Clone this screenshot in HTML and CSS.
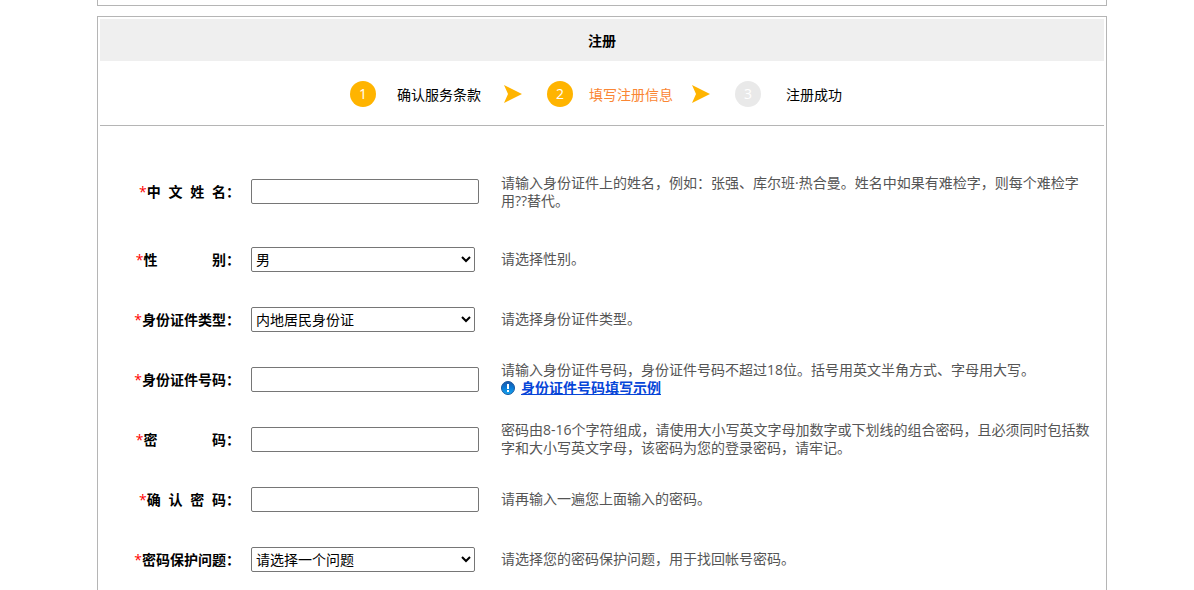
FILE: index.html
```
<!DOCTYPE html>
<html lang="zh-CN">
<head>
<meta charset="utf-8">
<title>注册</title>
<link rel="stylesheet" href="styles.css">
</head>
<body>
<header class="banner"></header>
<main class="panel">
  <h1 class="title">注册</h1>
  <ol class="steps">
    <li class="step"><span class="badge">1</span><span class="step-name step-name-first">确认服务条款</span></li>
    <li class="arrow" aria-hidden="true"><svg viewBox="0 0 20 18" width="20" height="18"><path d="M1 0 19 9 1 18 5 9z" fill="#ffb400"/></svg></li>
    <li class="step current"><span class="badge">2</span><span class="step-name">填写注册信息</span></li>
    <li class="arrow" aria-hidden="true"><svg viewBox="0 0 20 18" width="20" height="18"><path d="M1 0 19 9 1 18 5 9z" fill="#ffb400"/></svg></li>
    <li class="step todo"><span class="badge">3</span><span class="step-name step-name-last">注册成功</span></li>
  </ol>
  <form class="form">
    <div class="row row-tall">
      <label class="label" for="name"><span class="star">*</span>中&nbsp;&nbsp;文&nbsp;&nbsp;姓&nbsp;&nbsp;名：</label>
      <div class="control"><input class="field" type="text" id="name"></div>
      <p class="hint">请输入身份证件上的姓名，例如：张强、库尔班·热合曼。姓名中如果有难检字，则每个难检字<br>用??替代。</p>
    </div>
    <div class="row">
      <label class="label" for="sex"><span class="star">*</span>性&nbsp;&nbsp;&nbsp;&nbsp;&nbsp;&nbsp;&nbsp;&nbsp;&nbsp;&nbsp;&nbsp;&nbsp;&nbsp;&nbsp;别：</label>
      <div class="control"><select class="select" id="sex"><option>男</option><option>女</option></select></div>
      <p class="hint">请选择性别。</p>
    </div>
    <div class="row">
      <label class="label" for="idtype"><span class="star">*</span>身份证件类型：</label>
      <div class="control"><select class="select" id="idtype"><option>内地居民身份证</option></select></div>
      <p class="hint">请选择身份证件类型。</p>
    </div>
    <div class="row">
      <label class="label" for="idno"><span class="star">*</span>身份证件号码：</label>
      <div class="control"><input class="field" type="text" id="idno"></div>
      <div class="hint">
        <p class="hint-line">请输入身份证件号码，身份证件号码不超过18位。括号用英文半角方式、字母用大写。</p>
        <a class="example" href="#"><svg viewBox="0 0 14 14" width="14" height="14" aria-hidden="true"><defs><linearGradient id="blue" x1="0" y1="0" x2="0" y2="1"><stop offset="0" stop-color="#1b55a8"/><stop offset=".5" stop-color="#087bd8"/><stop offset="1" stop-color="#18a8f0"/></linearGradient></defs><circle cx="7" cy="7" r="6.5" fill="url(#blue)" stroke="#17579f"/><path d="M6 3h2v5H6zM6 9h2v2H6z" fill="#fff"/></svg><span class="example-text">身份证件号码填写示例</span></a>
      </div>
    </div>
    <div class="row">
      <label class="label" for="pwd"><span class="star">*</span>密&nbsp;&nbsp;&nbsp;&nbsp;&nbsp;&nbsp;&nbsp;&nbsp;&nbsp;&nbsp;&nbsp;&nbsp;&nbsp;&nbsp;码：</label>
      <div class="control"><input class="field" type="password" id="pwd"></div>
      <p class="hint">密码由8-16个字符组成，请使用大小写英文字母加数字或下划线的组合密码，且必须同时包括数<br>字和大小写英文字母，该密码为您的登录密码，请牢记。</p>
    </div>
    <div class="row">
      <label class="label" for="pwd2"><span class="star">*</span>确&nbsp;&nbsp;认&nbsp;&nbsp;密&nbsp;&nbsp;码：</label>
      <div class="control"><input class="field" type="password" id="pwd2"></div>
      <p class="hint">请再输入一遍您上面输入的密码。</p>
    </div>
    <div class="row">
      <label class="label" for="question"><span class="star">*</span>密码保护问题：</label>
      <div class="control"><select class="select" id="question"><option>请选择一个问题</option></select></div>
      <p class="hint">请选择您的密码保护问题，用于找回帐号密码。</p>
    </div>
  </form>
</main>
</body>
</html>
```
FILE: styles.css
```
* { box-sizing: border-box; }

body {
  margin: 0;
  padding-left: 10px;
  min-height: 100vh;
  display: flex;
  flex-direction: column;
  align-items: center;
  background: #fff;
  color: #000;
  font: 14px/18px "Open Sans", "Noto Sans CJK SC", sans-serif;
}

.banner,
.panel {
  width: 100%;
  max-width: 1010px;
  border: 1px solid #b5b5b5;
}

.banner {
  height: 6px;
  border-top: 0;
  margin-bottom: 10px;
}

.panel {
  flex: 1;
  padding: 2px 2px 0;
  border-bottom: 0;
}

.title {
  margin: 0;
  padding: 13px 0 11px;
  background: #efefef;
  text-align: center;
  font-size: 14px;
  line-height: 18px;
}

.steps {
  display: flex;
  align-items: center;
  justify-content: center;
  margin: 0;
  padding: 20px 12px 18px 0;
  list-style: none;
  border-bottom: 1px solid #b5b5b5;
}

.step { display: flex; align-items: center; }

.badge {
  width: 26px;
  height: 26px;
  border-radius: 50%;
  background: #ffb400;
  color: #fff;
  font-weight: 500;
  line-height: 26px;
  text-align: center;
}

.todo .badge { background: #e9e9e9; }

.step-name { margin-left: 16px; padding-top: 2px; }
.step-name-first { margin-left: 21px; }
.step-name-last { margin-left: 25px; }
.current .step-name { color: #fa8634; }

.arrow { display: flex; width: 20px; margin: 0 24px 0 22px; }
.current + .arrow { margin-left: 18px; }

.form { padding-top: 27px; }

.row {
  display: grid;
  grid-template-columns: 140px 228px 1fr;
  align-items: center;
  min-height: 60px;
}

.row-tall { min-height: 76px; }
.row-tall .hint { padding-top: 2px; }

.label {
  padding-top: 2px;
  text-align: right;
  white-space: nowrap;
  font-weight: bold;
  font-family: "Liberation Sans", "Noto Sans CJK SC", sans-serif;
}

.star {
  color: #f00;
  font-family: "Open Sans", sans-serif;
  font-weight: normal;
}

.control { margin-left: 11px; width: 228px; }

.field,
.select {
  display: block;
  height: 25px;
  border: 1px solid #767676;
  border-radius: 2px;
  background-color: #fff;
  color: #000;
  font: 14px/18px "Open Sans", "Noto Sans CJK SC", sans-serif;
}

.field { width: 228px; }
.select { width: 224px; padding: 0; }

.hint {
  margin: 0 0 0 33px;
  color: #555;
}

.hint-line { margin: 0; }

.example {
  display: flex;
  align-items: center;
  gap: 6px;
  color: #0645d8;
  font-weight: bold;
  text-decoration: none;
}

.example-text { text-decoration: underline; }
```
